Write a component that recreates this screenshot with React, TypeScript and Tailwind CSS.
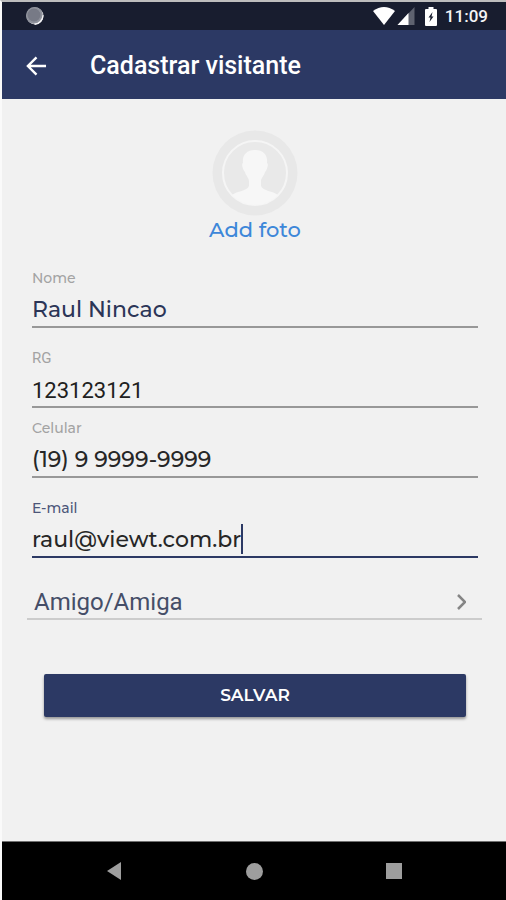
import { useState, type ReactNode } from "react";

const bodyFont = "font-['Montserrat','Inter',sans-serif]";
const robotoFont = "font-['Roboto',sans-serif]";

function StatusBar() {
  return (
    <div className="flex h-7 items-center justify-between bg-[#181d2f] pr-[18px] pl-6">
      <svg width="18" height="18" viewBox="0 0 18 18" aria-hidden="true">
        <circle cx="9" cy="9" r="8.500" fill="#f0f0f3" />
        <circle cx="8.500" cy="8.500" r="8.500" fill="#8f929c" />
        <path d="M16.500 8A9 9 0 0 1 8 16.500L9 18A9.500 9.500 0 0 0 17.500 8Z" fill="#f4f4f6" />
        <circle cx="8" cy="8" r="6.500" fill="#777a86" />
      </svg>
      <div className="flex items-center">
        <svg width="22" height="18" viewBox="0 0 22 18" aria-hidden="true">
          <path d="M0 4Q11-4 22 4L11 18Z" fill="#fff" />
        </svg>
        <svg className="ml-0.5" width="18" height="18" viewBox="0 0 17 18" aria-hidden="true">
          <path d="M17 0V18H0Z" fill="#5e626f" />
          <path d="M11 6V18H0Z" fill="#fff" />
        </svg>
        <svg className="ml-2.5" width="12" height="19" viewBox="0 0 12 19" aria-hidden="true">
          <path d="M3.500 0H8.500V2H11Q12 2 12 3V18Q12 19 11 19H1Q0 19 0 18V3Q0 2 1 2H3.500Z" fill="#fff" />
          <path d="M7.500 5L3.500 10.500H5.500L4.500 15L8.500 9.500H6.500Z" fill="#181d2f" />
        </svg>
        <span className={`ml-2 text-[17px] leading-6 font-medium text-[#f4f4f6] ${robotoFont}`}>11:09</span>
      </div>
    </div>
  );
}

function Header() {
  return (
    <header className="flex h-[69px] items-center bg-[#2c3964] pt-0.5 pl-6 text-white">
      <button type="button" aria-label="Voltar" className="flex h-6 w-6 items-center">
        <svg width="21" height="20" viewBox="0 0 22 20" fill="none" stroke="currentColor" strokeWidth="2.500" aria-hidden="true">
          <path d="M21 10H2.500M11 1L2 10L11 19" />
        </svg>
      </button>
      <h1 className={`ml-10 text-[25px] font-medium ${robotoFont}`}>Cadastrar visitante</h1>
    </header>
  );
}

function Field({ id, label, focused = false, children }: { id: string; label: string; focused?: boolean; children: ReactNode }) {
  return (
    <div className={`flex flex-col border-b-2 ${focused ? "border-[#2c3964]" : "border-[#989898]"}`}>
      <label
        htmlFor={id}
        className={`leading-5 ${id === "rg" ? `text-[15px] ${robotoFont}` : "text-[14px] font-medium"} ${focused ? "text-[#4c5679]" : "text-[#a3a3a3]"}`}
      >
        {label}
      </label>
      {children}
    </div>
  );
}

export default function App() {
  const [nome, setNome] = useState("Raul Nincao");
  const [rg, setRg] = useState("123123121");
  const [celular, setCelular] = useState("(19) 9 9999-9999");
  const [email, setEmail] = useState("raul@viewt.com.br");

  return (
    <div className={`flex min-h-screen flex-col border-t-2 border-l-2 border-t-[#bdbdbd] border-l-[#fafafa] bg-[#f1f1f1] ${bodyFont}`}>
      <StatusBar />
      <Header />
      <form className="flex grow flex-col pt-[31px] pr-7 pb-8 pl-[30px]" onSubmit={(e) => e.preventDefault()}>
        <button type="button" className="flex flex-col items-center self-center text-[#3d87d9]">
          <svg width="86" height="86" viewBox="0 0 86 86" aria-hidden="true">
            <circle cx="43" cy="43" r="42.500" fill="#e8e8e8" />
            <circle cx="43" cy="43" r="32" fill="#e9e9e9" stroke="#f5f5f5" strokeWidth="2" />
            <path
              d="M43 20C34 20 30 26 31 33C29 34 31 40 33 42C34 46 37 48 37 51V56C35 61 25 61 20 65A32 32 0 0 0 66 65C61 61 51 61 49 56V51C49 48 52 46 53 42C55 40 57 34 55 33C56 26 52 20 43 20Z"
              fill="#f7f7f7"
            />
          </svg>
          <span className="text-[21px] leading-7 font-medium">Add foto</span>
        </button>

        <div className="mt-6 flex flex-col gap-5 text-[22px]">
          <Field id="nome" label="Nome">
            <input id="nome" value={nome} onChange={(e) => setNome(e.target.value)} className="h-[38px] w-full pt-1 font-medium text-[#2b3557] outline-none" />
          </Field>
          <div className="flex flex-col gap-2.5">
            <Field id="rg" label="RG">
              <input id="rg" value={rg} onChange={(e) => setRg(e.target.value)} className={`h-[38px] w-full pt-1.5 text-[#202020] outline-none ${robotoFont}`} />
            </Field>
            <Field id="celular" label="Celular">
              <input id="celular" type="tel" value={celular} onChange={(e) => setCelular(e.target.value)} className="h-[38px] w-full pt-1 font-medium text-[#262626] outline-none" />
            </Field>
          </div>
          <Field id="email" label="E-mail" focused>
            <div className="flex h-[38px] items-center pt-1">
              <input
                id="email"
                value={email}
                onChange={(e) => setEmail(e.target.value)}
                className="h-[30px] max-w-full field-sizing-content border-r-2 border-[#2c3964] font-medium text-[#262626] outline-none"
              />
            </div>
          </Field>
        </div>

        <div className="-mr-1 -ml-[5px] mt-7 flex items-center border-b-2 border-[#cccccc]">
          <select aria-label="Tipo de visitante" className={`h-8 grow appearance-none pl-[7px] text-2xl text-[#454e68] outline-none ${robotoFont}`}>
            <option>Amigo/Amiga</option>
          </select>
          <svg className="mr-4" width="9" height="16" viewBox="0 0 9 16" fill="none" stroke="#858585" strokeWidth="2.500" aria-hidden="true">
            <path d="M1 1L8 8L1 15" />
          </svg>
        </div>

        <button type="submit" className="mx-3 mt-[54px] h-[43px] rounded-xs bg-[#2c3964] text-[17px] font-semibold text-white shadow-[0_2px_3px_#00000060]">
          SALVAR
        </button>
      </form>

      <nav className="flex h-[59px] items-center justify-center gap-[116px] border-t border-[#707070] bg-black text-[#9e9e9e]">
        <button type="button" aria-label="Voltar à tela anterior" className="flex w-6 justify-center">
          <svg width="14" height="18" viewBox="0 0 14 18" fill="currentColor" aria-hidden="true">
            <path d="M14 0V18L0 9Z" />
          </svg>
        </button>
        <button type="button" aria-label="Início" className="flex w-6 justify-center">
          <span className="h-[17px] w-[17px] rounded-full bg-current" />
        </button>
        <button type="button" aria-label="Aplicativos recentes" className="flex w-6 justify-center">
          <span className="h-4 w-4 bg-current" />
        </button>
      </nav>
    </div>
  );
}
